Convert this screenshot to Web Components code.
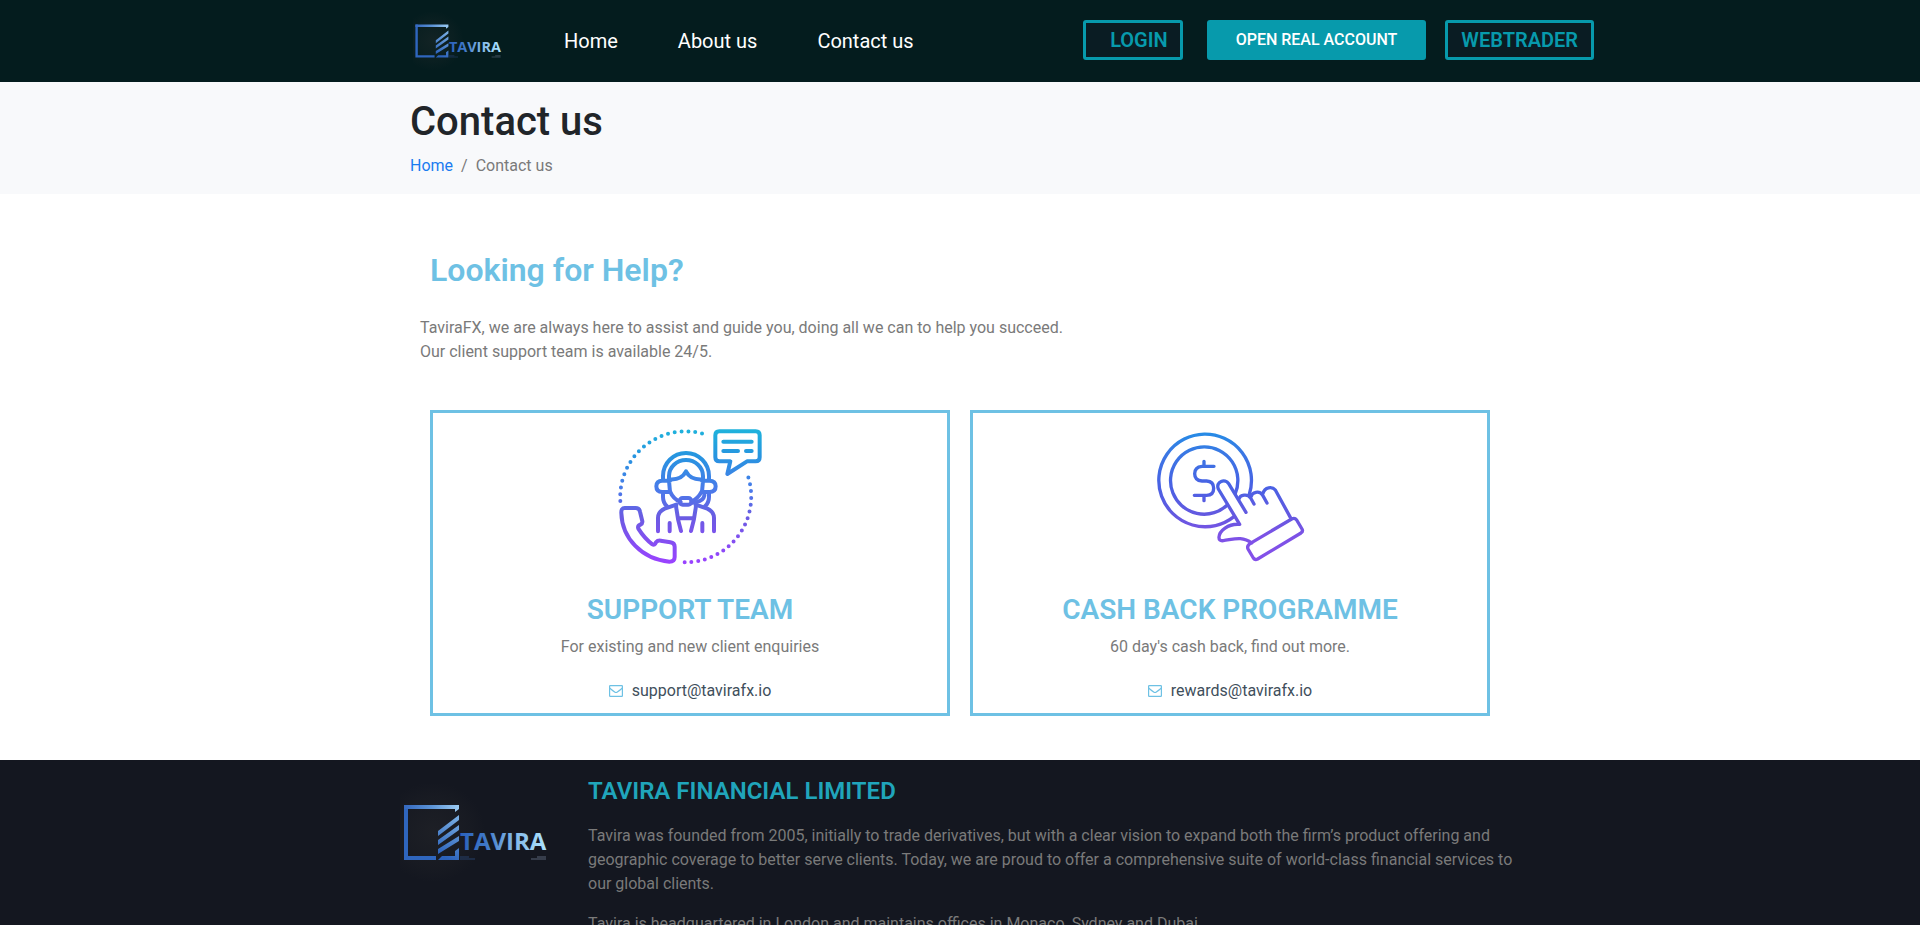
<!DOCTYPE html>
<html lang="en">
<head>
<meta charset="utf-8">
<meta name="viewport" content="width=device-width, initial-scale=1">
<title>Contact us</title>
<style>
	:root {
		--teal: #079aac;
		--sky: #6ec1e4;
		--edge: max(16px, calc(50% - 550px));
	}

	body {
		margin: 0;
		font: 16px/24px Roboto, sans-serif;
		color: #7a7a7a;
		background: #fff;
	}
</style>
</head>
<body>
<site-header>
	<nav-link href="#home">Home</nav-link>
	<nav-link href="#about">About us</nav-link>
	<nav-link href="#contact">Contact us</nav-link>
	<action-button slot="actions" kind="login">LOGIN</action-button>
	<action-button slot="actions" kind="account">OPEN REAL ACCOUNT</action-button>
	<action-button slot="actions" kind="trader">WEBTRADER</action-button>
</site-header>

<page-title>Contact us</page-title>

<help-section>
	<span slot="title">Looking for Help?</span>
	<span slot="intro">TaviraFX, we are always here to assist and guide you, doing all we can to help you succeed.<br>Our client support team is available 24/5.</span>
	<contact-card email="support@tavirafx.io">
		<support-icon slot="icon"></support-icon>
		<span slot="title">SUPPORT TEAM</span>
		For existing and new client enquiries
	</contact-card>
	<contact-card email="rewards@tavirafx.io">
		<cashback-icon slot="icon"></cashback-icon>
		<span slot="title">CASH BACK PROGRAMME</span>
		60 day's cash back, find out more.
	</contact-card>
</help-section>

<site-footer>
	<span slot="title">TAVIRA FINANCIAL LIMITED</span>
	<footer-text>Tavira was founded from 2005, initially to trade derivatives, but with a clear vision to expand both the firm’s product offering and geographic coverage to better serve clients. Today, we are proud to offer a comprehensive suite of world-class financial services to our global clients.</footer-text>
	<footer-text>Tavira is headquartered in London and maintains offices in Monaco, Sydney and Dubai.</footer-text>
</site-footer>

<script>
class TaviraLogo extends HTMLElement {
	constructor() {
		super();
		this.attachShadow({ mode: 'open' });
		this.shadowRoot.innerHTML = `
		<style>
		:host {
			display: block;
			flex: none;
			width: 150px;
		}

		svg {
			display: block;
			width: 100%;
		}
		</style>
		<svg viewBox="0 0 150 100" role="img" aria-label="Tavira">
			<defs>
				<linearGradient id="top" x1="0" x2="1"><stop offset="0" stop-color="#3468bf"/><stop offset=".5" stop-color="#5b93d6"/><stop offset="1" stop-color="#9ccbf2"/></linearGradient>
				<linearGradient id="bar" gradientUnits="userSpaceOnUse" x1="38" y1="70" x2="60" y2="28"><stop offset="0" stop-color="#2b62bb"/><stop offset="1" stop-color="#83b8e8"/></linearGradient>
				<linearGradient id="word" x1="0" x2="1"><stop offset="0" stop-color="#2b62bb"/><stop offset=".3" stop-color="#3f78c8"/><stop offset=".6" stop-color="#80b5e6"/><stop offset="1" stop-color="#ace4ff"/></linearGradient>
				<radialGradient id="halo"><stop offset="0" stop-color="#333" stop-opacity=".3"/><stop offset=".7" stop-color="#333" stop-opacity=".12"/><stop offset="1" stop-color="#333" stop-opacity="0"/></radialGradient>
			</defs>
			<ellipse cx="33" cy="48" rx="52" ry="50" fill="url(#halo)"/>
			<path d="M4 21H8V72H36V76H4Z" fill="#2f66be"/>
			<path d="M4 21H59V25L55 28V25H4Z" fill="url(#top)"/>
			<path d="M38 47 59 31V36L38 52ZM38 56 59 41V46L38 61ZM38 65 59 52V57L38 70ZM38 76 42 72H55V67L59 64V76Z" fill="url(#bar)"/>
			<text x="60" y="66" fill="url(#word)" font-family="Open Sans, sans-serif" font-weight="700" font-size="24">TAVIRA</text>
			<path d="M60 73H69M60 75H75" stroke="#27406b" stroke-width="1"/>
			<path d="M137 73H146M131 75H146" stroke="#586477" stroke-width="1"/>
		</svg>
		`;
	}
}

class NavLink extends HTMLElement {
	constructor() {
		super();
		this.attachShadow({ mode: 'open' });
		this.shadowRoot.innerHTML = `
		<style>
		:host {
			display: block;
		}

		a {
			font-size: 20px;
			color: #fff;
			text-decoration: none;
			white-space: nowrap;
		}
		</style>
		<a href="${this.getAttribute('href')}"><slot></slot></a>
		`;
	}
}

class ActionButton extends HTMLElement {
	constructor() {
		super();
		this.attachShadow({ mode: 'open' });
		this.shadowRoot.innerHTML = `
		<style>
		:host {
			display: block;
		}

		:host([kind="account"]) {
			margin: 0 19px 0 24px;
		}

		button {
			display: block;
			height: 40px;
			padding: 0 13px;
			border: 3px solid var(--teal);
			border-radius: 3px;
			background: #0a1c23;
			color: var(--teal);
			font: 600 20px/34px Roboto, sans-serif;
			white-space: nowrap;
			cursor: pointer;
		}

		.login {
			padding: 0 12px 0 24px;
		}

		.account {
			padding: 0 26px 2px;
			background: var(--teal);
			color: #fff;
			font-size: 16px;
			font-weight: 500;
		}
		</style>
		<button type="button" class="${this.getAttribute('kind')}"><slot></slot></button>
		`;
	}
}

class SiteHeader extends HTMLElement {
	constructor() {
		super();
		this.attachShadow({ mode: 'open' });
		this.shadowRoot.innerHTML = `
		<style>
		:host {
			display: block;
			background: #041c1e;
		}

		header {
			display: flex;
			align-items: flex-start;
			max-width: 1184px;
			padding: 12px 0 10px;
			margin-left: var(--edge);
		}

		tavira-logo {
			width: 90px;
			margin-left: 3px;
		}

		nav {
			display: flex;
			gap: 60px;
			margin: 17px 20px 0 61px;
		}

		.actions {
			display: flex;
			margin: 8px 0 0 auto;
		}
		</style>
		<header>
			<tavira-logo></tavira-logo>
			<nav><slot></slot></nav>
			<div class="actions"><slot name="actions"></slot></div>
		</header>
		`;
	}
}

class PageTitle extends HTMLElement {
	constructor() {
		super();
		this.attachShadow({ mode: 'open' });
		this.shadowRoot.innerHTML = `
		<style>
		:host {
			display: block;
			padding: 16px var(--edge);
			background: #f8f9fb;
		}

		h1 {
			margin: 0 0 8px;
			font-size: 40px;
			font-weight: 500;
			line-height: 48px;
			color: #212529;
		}

		ol {
			display: flex;
			gap: 8px;
			margin: 0;
			padding: 0;
			list-style: none;
		}

		li + li::before {
			content: "/";
			padding-right: 8px;
		}

		a {
			color: #1a7cf0;
			text-decoration: none;
		}
		</style>
		<h1><slot></slot></h1>
		<ol>
			<li><a href="#home">Home</a></li>
			<li>Contact us</li>
		</ol>
		`;
	}
}

class HelpSection extends HTMLElement {
	constructor() {
		super();
		this.attachShadow({ mode: 'open' });
		this.shadowRoot.innerHTML = `
		<style>
		:host {
			display: block;
			padding: 57px var(--edge) 44px;
		}

		h2 {
			margin: 0 20px;
			font-size: 32px;
			font-weight: 600;
			line-height: 38px;
			color: var(--sky);
		}

		p {
			margin: 27px 10px 46px;
		}

		.cards {
			display: grid;
			grid-template-columns: 1fr 1fr;
			gap: 20px;
			margin: 0 20px;
		}
		</style>
		<h2><slot name="title"></slot></h2>
		<p><slot name="intro"></slot></p>
		<div class="cards"><slot></slot></div>
		`;
	}
}

class ContactCard extends HTMLElement {
	constructor() {
		super();
		this.attachShadow({ mode: 'open' });
		const email = this.getAttribute('email');
		this.shadowRoot.innerHTML = `
		<style>
		:host {
			display: block;
			padding: 2px 10px 10px;
			border: 3px solid var(--sky);
			text-align: center;
		}

		h3 {
			margin: 18px 0 8px;
			font-size: 28px;
			font-weight: 600;
			line-height: 34px;
			color: var(--sky);
		}

		p {
			margin: 0 0 20px;
		}

		a {
			display: flex;
			justify-content: center;
			align-items: center;
			gap: 9px;
			color: #3f4f5c;
			text-decoration: none;
		}

		svg {
			width: 14px;
			height: 12px;
		}
		</style>
		<slot name="icon"></slot>
		<h3><slot name="title"></slot></h3>
		<p><slot></slot></p>
		<a href="mailto:${email}">
			<svg viewBox="0 0 14 12" fill="none" stroke="#6ec1e4" stroke-width="1.2"><rect x=".6" y=".6" width="12.800" height="10.800" rx=".6"/><path d="M.6 3C3 5 5.500 7.500 7 7.500S11 5 13.400 3"/></svg>
			${email}
		</a>
		`;
	}
}

class SupportIcon extends HTMLElement {
	constructor() {
		super();
		this.attachShadow({ mode: 'open' });
		this.shadowRoot.innerHTML = `
		<style>
		:host, svg {
			display: block;
		}

		svg {
			width: 180px;
			height: 160px;
			margin: 0 auto;
		}
		</style>
		<svg viewBox="0 0 540 480" fill="none" stroke="url(#g)" stroke-width="12" stroke-linecap="round" stroke-linejoin="round" aria-hidden="true">
			<linearGradient id="g" gradientUnits="userSpaceOnUse" x1="0" y1="45" x2="0" y2="445">
				<stop offset="0" stop-color="#1fb2dc"/><stop offset=".2" stop-color="#2794e0"/><stop offset=".45" stop-color="#4a7aea"/><stop offset=".65" stop-color="#6a5ce2"/><stop offset="1" stop-color="#9a42ff"/>
			</linearGradient>
			<!-- dotted ring -->
			<path d="M61 258A197 197 0 0 1 322 60" stroke-dasharray="0 20.500"/>
			<path d="M254 442A197 197 0 0 0 440 173" stroke-dasharray="0 20.500"/>
			<!-- speech bubble -->
			<path d="M358 49H467Q479 49 479 61V127Q479 139 467 139H441L382 177L391 139H358Q346 139 346 127V61Q346 49 358 49ZM370 80H455M370 108H414M438 108H455"/>
			<!-- headset -->
			<path d="M189 195V183A69 69 0 0 1 327 183V195"/>
			<path d="M207 196V183A51 48 0 0 1 309 183V196"/>
			<path d="M210 197H187Q169 197 169 214T187 231H210L207 197M306 197H328Q347 197 347 214T328 231H306L309 197"/>
			<path d="M209 193C240 195 253 179 258 169C263 179 275 195 307 193"/>
			<path d="M211 231C218 248 232 257 242 261M304 231Q296 248 275 260"/>
			<path d="M189 233V246Q189 263 201 274M327 233V246Q327 263 315 274M313 233V242Q310 257 290 261L276 263"/>
			<rect x="239" y="249" width="35" height="20" rx="9"/>
			<!-- jacket -->
			<path d="M174 349V309Q174 290 194 281L229 269M342 349V309Q342 290 322 281L287 269"/>
			<path d="M228 271Q232 312 243 348M288 271Q284 312 273 348M237 310H279M209 324V349M307 324V349"/>
			<!-- handset -->
			<path d="M74 279H107Q118 279 120 290L127 319Q128 325 121 329Q112 333 115 341Q134 371 157 388Q164 392 168 382Q173 376 182 377L211 382Q224 384 224 395V426Q224 440 208 440C126 433 66 370 64 294Q63 279 74 279Z"/>
		</svg>
		`;
	}
}

class CashbackIcon extends HTMLElement {
	constructor() {
		super();
		this.attachShadow({ mode: 'open' });
		this.shadowRoot.innerHTML = `
		<style>
		:host, svg {
			display: block;
		}

		svg {
			width: 180px;
			height: 160px;
			margin: 0 auto;
		}
		</style>
		<svg viewBox="0 0 540 480" fill="none" stroke="url(#g)" stroke-width="10" stroke-linecap="round" stroke-linejoin="round" aria-hidden="true">
			<linearGradient id="g" gradientUnits="userSpaceOnUse" x1="0" y1="55" x2="0" y2="440">
				<stop offset="0" stop-color="#268be6"/><stop offset=".15" stop-color="#3a78e4"/><stop offset=".4" stop-color="#4862e4"/><stop offset=".65" stop-color="#6558e0"/><stop offset=".8" stop-color="#7d52e6"/><stop offset="1" stop-color="#8450ea"/>
			</linearGradient>
			<!-- coin -->
			<path d="M282 305A139 139 0 1 1 328 238"/>
			<path d="M262 270A101 101 0 1 1 286 235"/>
			<path d="M222 154H186Q164 156 164 176T186 198H200Q221 199 221 220T200 241H163M192 139V154M192 242V257"/>
			<!-- pointing hand -->
			<path d="M318 292L266 206C256 190 226 199 235 222L299 328C264 325 238 348 237 366Q236 379 250 377C277 374 306 361 335 384"/>
			<path d="M297 252C300 239 323 235 332 249L342 267M333 246C336 230 358 227 367 239L381 264M369 235C374 215 397 214 406 225L451 307"/>
			<!-- cuff -->
			<path d="M331 385L455 312Q464 307 470 315L486 342Q490 349 483 354L353 432Q345 436 340 429L324 402Q320 392 331 385Z"/>
		</svg>
		`;
	}
}

class FooterText extends HTMLElement {
	constructor() {
		super();
		this.attachShadow({ mode: 'open' });
		this.shadowRoot.innerHTML = `
		<style>
		:host {
			display: block;
		}

		p {
			margin: 0 0 16px;
		}
		</style>
		<p><slot></slot></p>
		`;
	}
}

class SiteFooter extends HTMLElement {
	constructor() {
		super();
		this.attachShadow({ mode: 'open' });
		this.shadowRoot.innerHTML = `
		<style>
		:host {
			display: block;
			background: #141720;
		}

		footer {
			display: flex;
			gap: 38px;
			max-width: 1120px;
			margin: 0 auto;
			padding-top: 17px;
		}

		tavira-logo {
			margin-top: 7px;
		}

		h2 {
			margin: 0 0 18px;
			font-size: 24px;
			font-weight: 600;
			line-height: 29px;
			color: #20a5bb;
		}
		</style>
		<footer>
			<tavira-logo></tavira-logo>
			<div>
				<h2><slot name="title"></slot></h2>
				<slot></slot>
			</div>
		</footer>
		`;
	}
}

customElements.define('tavira-logo', TaviraLogo);
customElements.define('nav-link', NavLink);
customElements.define('action-button', ActionButton);
customElements.define('site-header', SiteHeader);
customElements.define('page-title', PageTitle);
customElements.define('help-section', HelpSection);
customElements.define('contact-card', ContactCard);
customElements.define('support-icon', SupportIcon);
customElements.define('cashback-icon', CashbackIcon);
customElements.define('footer-text', FooterText);
customElements.define('site-footer', SiteFooter);
</script>
</body>
</html>
